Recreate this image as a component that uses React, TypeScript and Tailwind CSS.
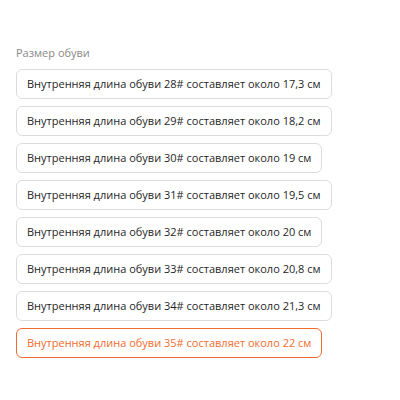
const sizes = [
  { size: 28, length: '17,3' },
  { size: 29, length: '18,2' },
  { size: 30, length: '19' },
  { size: 31, length: '19,5' },
  { size: 32, length: '20' },
  { size: 33, length: '20,8' },
  { size: 34, length: '21,3' },
  { size: 35, length: '22' },
];

export default function App() {
  const selected = 35;

  return (
    <div className="w-[400px] h-[400px] bg-white px-4 pt-[45px] font-['Open_Sans',sans-serif]">
      <div className="text-[11px] leading-[15px] text-[#8a8a8a] mb-[9px]">Размер обуви</div>
      <div className="flex flex-col items-start gap-[7px]">
        {sizes.map((s) => (
          <button
            key={s.size}
            className={`h-[30px] px-[10px] rounded-[6px] border text-[11px] text-left whitespace-nowrap ${
              s.size === selected
                ? 'border-[#f26b2e] text-[#f26b2e]'
                : 'border-[#dcdcdc] text-[#1f1f1f]'
            }`}
          >
            Внутренняя длина обуви {s.size}# составляет около {s.length} см
          </button>
        ))}
      </div>
    </div>
  );
}
